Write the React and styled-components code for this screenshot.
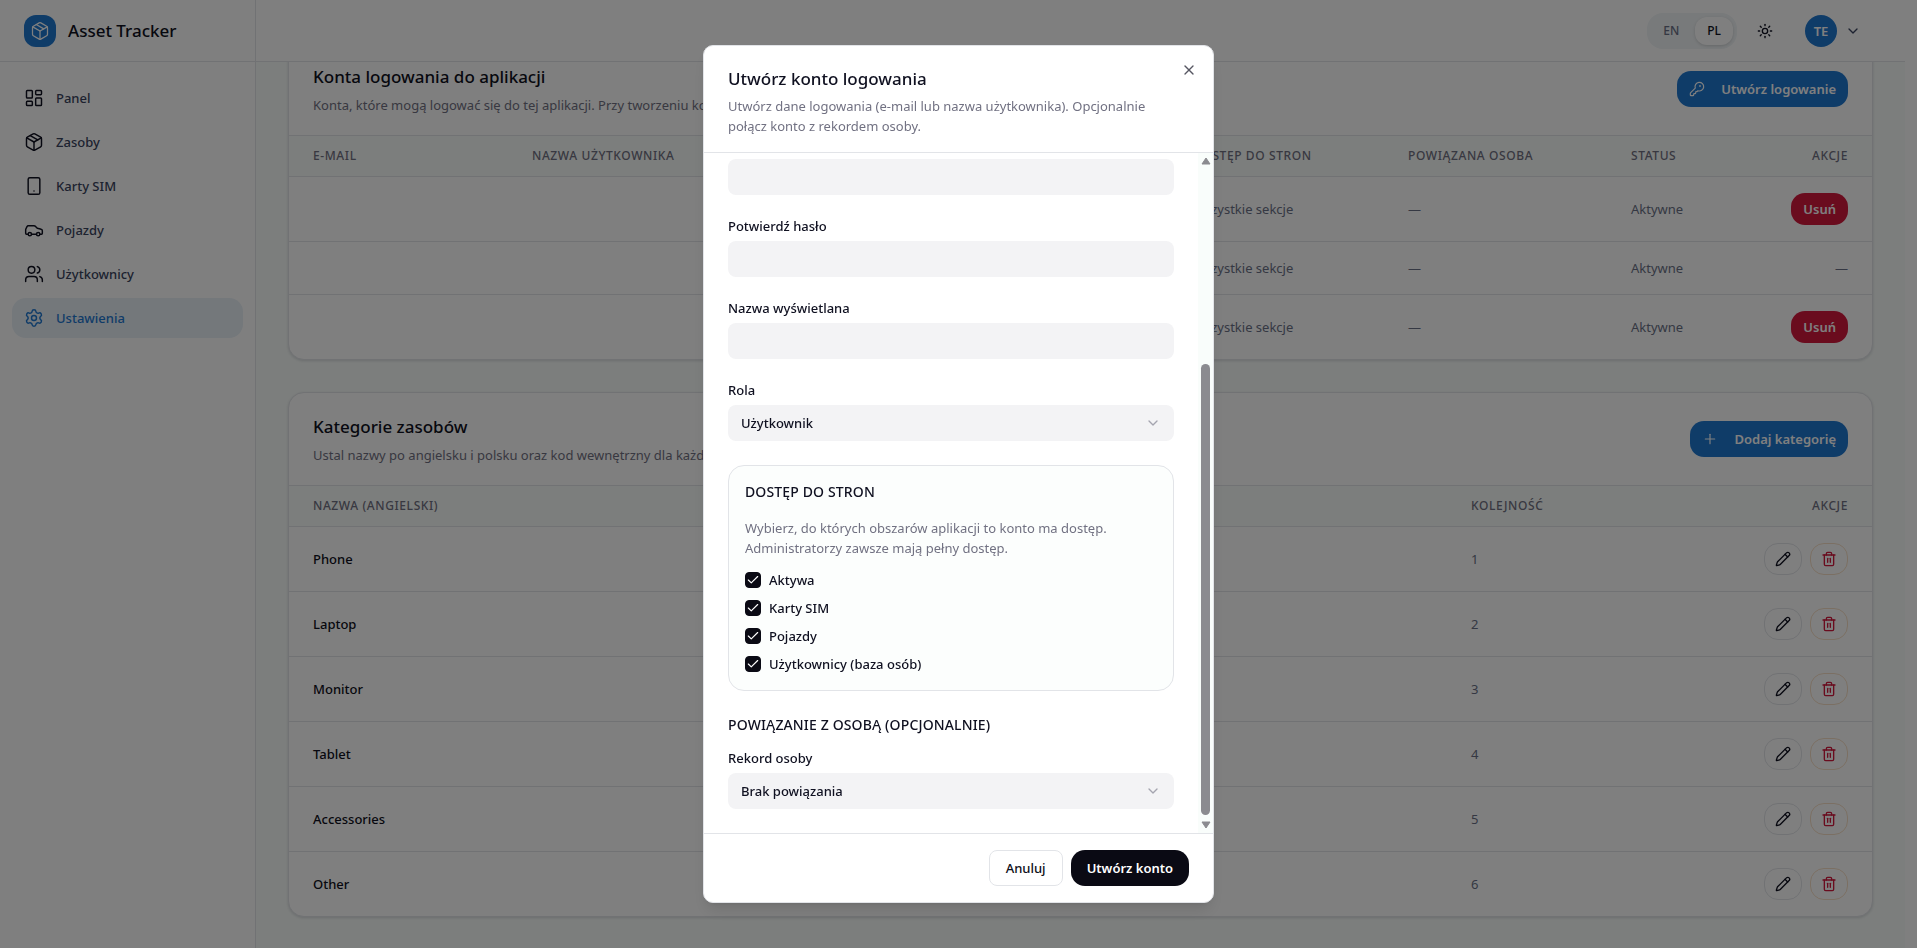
import React, { Component } from "react";
import styled, { createGlobalStyle, ThemeProvider } from "styled-components";
import {
  Car,
  Check,
  ChevronDown,
  KeyRound,
  LayoutDashboard,
  Package,
  Pencil,
  Plus,
  Settings,
  Smartphone,
  Sun,
  Trash2,
  Users,
  X,
} from "lucide-react";

const theme = {
  colors: {
    text: "#0f1020",
    ink: "#0a0a14",
    slate: "#3a4560",
    cell: "#6a7186",
    muted: "#717182",
    primary: "#1f78d1",
    danger: "#d4183d",
    dangerBorder: "#f7dfc6",
    border: "#e2e4e8",
    page: "#f9fdfb",
    field: "#f3f3f5",
    active: "#e8f0f7",
  },
  size: {
    small: "12px",
    body: "13px",
    heading: "14px",
    title: "17px",
  },
};

const navItems = [
  { label: "Panel", icon: LayoutDashboard },
  { label: "Zasoby", icon: Package },
  { label: "Karty SIM", icon: Smartphone },
  { label: "Pojazdy", icon: Car },
  { label: "Użytkownicy", icon: Users },
  { label: "Ustawienia", icon: Settings, active: true },
];

const accounts = [
  { id: 1, removable: true },
  { id: 2, removable: false },
  { id: 3, removable: true },
];

const categories = ["Phone", "Laptop", "Monitor", "Tablet", "Accessories", "Other"];

const pages = ["Aktywa", "Karty SIM", "Pojazdy", "Użytkownicy (baza osób)"];

class LoginDialog extends Component {
  constructor(props) {
    super(props);
    this.state = {
      password: "",
      confirm: "",
      name: "",
      access: { 0: true, 1: true, 2: true, 3: true },
    };

    this._handleChange = this._handleChange.bind(this);
    this._toggleAccess = this._toggleAccess.bind(this);
  }

  _handleChange(event) {
    this.setState({ [event.target.name]: event.target.value });
  }

  _toggleAccess(index) {
    const { access } = this.state;
    this.setState({ access: { ...access, [index]: !access[index] } });
  }

  render() {
    const { password, confirm, name, access } = this.state;
    return (
      <Overlay>
        <Dialog role="dialog" aria-modal="true" aria-labelledby="dialog-title">
          <DialogHeader>
            <DialogTitle id="dialog-title">Utwórz konto logowania</DialogTitle>
            <DialogText>
              Utwórz dane logowania (e-mail lub nazwa użytkownika). Opcjonalnie połącz konto z
              rekordem osoby.
            </DialogText>
            <CloseButton type="button" aria-label="Zamknij">
              <X size={16} />
            </CloseButton>
          </DialogHeader>

          <DialogBody>
            <Form>
              <Input
                type="password"
                name="password"
                aria-label="Hasło"
                value={password}
                onChange={this._handleChange}
              />
              <Field>
                <Label htmlFor="confirm">Potwierdź hasło</Label>
                <Input
                  type="password"
                  id="confirm"
                  name="confirm"
                  value={confirm}
                  onChange={this._handleChange}
                />
              </Field>
              <Field>
                <Label htmlFor="name">Nazwa wyświetlana</Label>
                <Input
                  type="text"
                  id="name"
                  name="name"
                  value={name}
                  onChange={this._handleChange}
                />
              </Field>
              <Field>
                <Label htmlFor="role">Rola</Label>
                <SelectBox>
                  <Select id="role">
                    <option>Użytkownik</option>
                    <option>Administrator</option>
                  </Select>
                  <ChevronDown size={16} />
                </SelectBox>
              </Field>

              <AccessBox>
                <SectionHeading>Dostęp do stron</SectionHeading>
                <AccessText>
                  Wybierz, do których obszarów aplikacji to konto ma dostęp. Administratorzy zawsze
                  mają pełny dostęp.
                </AccessText>
                <CheckList>
                  {pages.map((page, i) => (
                    <CheckRow key={page}>
                      <CheckMark>
                        <Checkbox checked={access[i]} onChange={() => this._toggleAccess(i)} />
                        {access[i] && <Check size={14} />}
                      </CheckMark>
                      {page}
                    </CheckRow>
                  ))}
                </CheckList>
              </AccessBox>

              <PersonSection>
                <SectionHeading>Powiązanie z osobą (opcjonalnie)</SectionHeading>
                <Field>
                  <Label htmlFor="person">Rekord osoby</Label>
                  <SelectBox>
                    <Select id="person">
                      <option>Brak powiązania</option>
                    </Select>
                    <ChevronDown size={16} />
                  </SelectBox>
                </Field>
              </PersonSection>
            </Form>
            <ScrollTrack aria-hidden="true">
              <Arrow viewBox="0 0 10 8">
                <path d="M5 1 L9 7 H1 Z" />
              </Arrow>
              <ScrollRail>
                <Thumb />
              </ScrollRail>
              <Arrow viewBox="0 0 10 8">
                <path d="M5 7 L9 1 H1 Z" />
              </Arrow>
            </ScrollTrack>
          </DialogBody>

          <DialogFooter>
            <CancelButton type="button">Anuluj</CancelButton>
            <SubmitButton type="button">Utwórz konto</SubmitButton>
          </DialogFooter>
        </Dialog>
      </Overlay>
    );
  }
}

export default class App extends Component {
  render() {
    return (
      <ThemeProvider theme={theme}>
        <GlobalStyle />
        <Shell>
          <Sidebar>
            <Brand>
              <BrandIcon>
                <Package size={20} strokeWidth={1.5} />
              </BrandIcon>
              <BrandName>Asset Tracker</BrandName>
            </Brand>
            <Nav>
              {navItems.map(({ label, icon: Icon, active }) => (
                <NavItem href="#" key={label} $active={active}>
                  <Icon size={20} strokeWidth={1.75} />
                  {label}
                </NavItem>
              ))}
            </Nav>
          </Sidebar>

          <Content>
            <TopBar>
              <LangSwitch>
                <LangButton type="button">EN</LangButton>
                <LangButton type="button" $on>
                  PL
                </LangButton>
              </LangSwitch>
              <ThemeButton type="button" aria-label="Motyw">
                <Sun size={16} />
              </ThemeButton>
              <UserButton type="button" aria-label="Konto">
                <Avatar>TE</Avatar>
                <ChevronDown size={16} />
              </UserButton>
            </TopBar>

            <Main>
              <Card>
                <CardHeader>
                  <div>
                    <CardTitle>Konta logowania do aplikacji</CardTitle>
                    <CardText>
                      Konta, które mogą logować się do tej aplikacji. Przy tworzeniu konta możesz
                      połączyć je z osobą.
                    </CardText>
                  </div>
                  <PrimaryButton type="button">
                    <KeyRound size={16} strokeWidth={1.75} />
                    Utwórz logowanie
                  </PrimaryButton>
                </CardHeader>
                <Table>
                  <colgroup>
                    <Col $w={219} />
                    <Col $w={219} />
                    <Col $w={220} />
                    <Col $w={222} />
                    <Col $w={215} />
                    <Col $w={223} />
                    <Col $w={141} />
                    <Col $w={124} />
                  </colgroup>
                  <thead>
                    <tr>
                      <Th>E-mail</Th>
                      <Th>Nazwa użytkownika</Th>
                      <Th>Nazwa</Th>
                      <Th>Rola</Th>
                      <Th>Dostęp do stron</Th>
                      <Th>Powiązana osoba</Th>
                      <Th>Status</Th>
                      <Th $right>Akcje</Th>
                    </tr>
                  </thead>
                  <tbody>
                    {accounts.map(({ id, removable }) => (
                      <tr key={id}>
                        <Td />
                        <Td />
                        <Td />
                        <Td />
                        <Td>Wszystkie sekcje</Td>
                        <Td>—</Td>
                        <Td>Aktywne</Td>
                        <Td $right>
                          {removable ? <DeleteButton type="button">Usuń</DeleteButton> : "—"}
                        </Td>
                      </tr>
                    ))}
                  </tbody>
                </Table>
              </Card>

              <Card>
                <CardHeader>
                  <div>
                    <CardTitle>Kategorie zasobów</CardTitle>
                    <CardText>
                      Ustal nazwy po angielsku i polsku oraz kod wewnętrzny dla każdej kategorii.
                    </CardText>
                  </div>
                  <PrimaryButton type="button">
                    <Plus size={16} strokeWidth={1.75} />
                    Dodaj kategorię
                  </PrimaryButton>
                </CardHeader>
                <Table>
                  <colgroup>
                    <Col $w={440} />
                    <Col $w={718} />
                    <Col $w={200} />
                    <Col $w={225} />
                  </colgroup>
                  <thead>
                    <tr>
                      <Th>Nazwa (angielski)</Th>
                      <Th />
                      <Th>Kolejność</Th>
                      <Th $right>Akcje</Th>
                    </tr>
                  </thead>
                  <tbody>
                    {categories.map((category, i) => (
                      <tr key={category}>
                        <Td $strong>{category}</Td>
                        <Td />
                        <Td>{i + 1}</Td>
                        <Td $right>
                          <RowActions>
                            <IconButton type="button" aria-label="Edytuj">
                              <Pencil size={16} />
                            </IconButton>
                            <IconButton type="button" aria-label="Usuń" $danger>
                              <Trash2 size={16} />
                            </IconButton>
                          </RowActions>
                        </Td>
                      </tr>
                    ))}
                  </tbody>
                </Table>
              </Card>
            </Main>
          </Content>
        </Shell>
        <LoginDialog />
      </ThemeProvider>
    );
  }
}

const GlobalStyle = createGlobalStyle`
  *, *::before, *::after {
    box-sizing: border-box;
  }
  body {
    margin: 0;
    overflow: hidden;
    background: #fff;
    color: ${theme.colors.text};
    font-family: "Noto Sans", "Open Sans", sans-serif;
    font-size: ${theme.size.body};
    line-height: 20px;
  }
  button, input, select {
    font: inherit;
    color: inherit;
  }
  button {
    cursor: pointer;
  }
  h1, h2, h3, p {
    margin: 0;
  }
`;

/* page */

const Shell = styled.div`
  display: flex;
  height: 100vh;
  padding-right: 12px;
`;

const Sidebar = styled.aside`
  flex: 0 0 256px;
  border-right: 1px solid ${p => p.theme.colors.border};
  background: #fff;
`;

const Brand = styled.div`
  display: flex;
  align-items: center;
  gap: 12px;
  height: 62px;
  padding: 0 24px;
  border-bottom: 1px solid ${p => p.theme.colors.border};
`;

const BrandIcon = styled.span`
  display: flex;
  align-items: center;
  justify-content: center;
  width: 32px;
  height: 32px;
  border-radius: 12px;
  background: ${p => p.theme.colors.primary};
  color: #fff;
`;

const BrandName = styled.span`
  font-size: ${p => p.theme.size.title};
  font-weight: 500;
`;

const Nav = styled.nav`
  display: flex;
  flex-direction: column;
  gap: 4px;
  padding: 16px 12px;
`;

const NavItem = styled.a`
  display: flex;
  align-items: center;
  gap: 12px;
  height: 40px;
  padding: 0 12px;
  border-radius: 14px;
  font-weight: 500;
  text-decoration: none;
  color: ${p => (p.$active ? p.theme.colors.primary : p.theme.colors.slate)};
  background: ${p => (p.$active ? p.theme.colors.active : "transparent")};

  svg {
    color: ${p => (p.$active ? p.theme.colors.primary : p.theme.colors.text)};
  }
`;

const Content = styled.div`
  display: flex;
  flex: 1;
  flex-direction: column;
  min-width: 0;
`;

const TopBar = styled.header`
  display: flex;
  flex: 0 0 62px;
  align-items: center;
  justify-content: flex-end;
  gap: 12px;
  padding: 0 32px;
  border-bottom: 1px solid ${p => p.theme.colors.border};
  background: #fff;
`;

const LangSwitch = styled.div`
  display: flex;
  gap: 4px;
  padding: 4px;
  border-radius: 16px;
  background: #f0f4f6;
`;

const LangButton = styled.button`
  height: 28px;
  padding: 0 12px;
  border: 0;
  border-radius: 12px;
  font-size: ${p => p.theme.size.small};
  font-weight: 500;
  color: ${p => (p.$on ? p.theme.colors.text : p.theme.colors.cell)};
  background: ${p => (p.$on ? "#fff" : "transparent")};
  box-shadow: ${p => (p.$on ? "0 1px 3px rgba(0, 0, 0, 0.15)" : "none")};
`;

const ThemeButton = styled.button`
  display: flex;
  align-items: center;
  justify-content: center;
  width: 32px;
  height: 32px;
  padding: 0;
  border: 0;
  background: none;
`;

const UserButton = styled.button`
  display: flex;
  align-items: center;
  gap: 8px;
  padding: 0 12px;
  border: 0;
  background: none;
  color: ${p => p.theme.colors.slate};
`;

const Avatar = styled.span`
  display: flex;
  align-items: center;
  justify-content: center;
  width: 32px;
  height: 32px;
  border-radius: 50%;
  font-weight: 600;
  color: #fff;
  background: ${p => p.theme.colors.primary};
`;

const Main = styled.main`
  display: flex;
  flex: 1;
  flex-direction: column;
  justify-content: flex-end;
  gap: 32px;
  min-height: 0;
  padding: 0 32px 31px;
  overflow: hidden;
  background: ${p => p.theme.colors.page};
`;

const Card = styled.section`
  flex: none;
  border: 1px solid ${p => p.theme.colors.border};
  border-radius: 16px;
  overflow: hidden;
  background: #fff;
  box-shadow: 0 1px 3px rgba(15, 23, 42, 0.15);
`;

const CardHeader = styled.div`
  display: flex;
  align-items: center;
  justify-content: space-between;
  padding: 20px 24px;
`;

const CardTitle = styled.h2`
  margin-bottom: 4px;
  font-size: ${p => p.theme.size.title};
  font-weight: 500;
  line-height: 28px;
`;

const CardText = styled.p`
  color: ${p => p.theme.colors.muted};
`;

const PrimaryButton = styled.button`
  display: flex;
  align-items: center;
  gap: 16px;
  height: 36px;
  padding: 0 12px;
  border: 0;
  border-radius: 14px;
  font-weight: 600;
  color: #fff;
  background: ${p => p.theme.colors.primary};
`;

const Table = styled.table`
  width: 100%;
  table-layout: fixed;
  border-collapse: separate;
  border-spacing: 0;
`;

const Col = styled.col`
  width: ${p => (p.$w / 1583) * 100}%;
`;

const Th = styled.th`
  height: 42px;
  padding: 0 24px;
  border: solid ${p => p.theme.colors.border};
  border-width: 1px 0;
  font-size: ${p => p.theme.size.small};
  font-weight: 500;
  letter-spacing: 0.05em;
  text-align: ${p => (p.$right ? "right" : "left")};
  text-transform: uppercase;
  white-space: nowrap;
  color: ${p => p.theme.colors.muted};
  background: ${p => p.theme.colors.page};
`;

const Td = styled.td`
  padding: 16px 24px;
  font-weight: ${p => (p.$strong ? 500 : 400)};
  text-align: ${p => (p.$right ? "right" : "left")};
  color: ${p => (p.$strong ? p.theme.colors.text : p.theme.colors.cell)};

  tr:not(:last-child) > & {
    border-bottom: 1px solid ${p => p.theme.colors.border};
  }
`;

const DeleteButton = styled.button`
  display: block;
  height: 32px;
  margin-left: auto;
  padding: 0 12px;
  border: 0;
  border-radius: 14px;
  font-weight: 600;
  color: #fff;
  background: ${p => p.theme.colors.danger};
`;

const RowActions = styled.div`
  display: flex;
  justify-content: flex-end;
  gap: 8px;
`;

const IconButton = styled.button`
  display: flex;
  align-items: center;
  justify-content: center;
  width: 38px;
  height: 32px;
  padding: 0;
  border: 1px solid ${p => (p.$danger ? p.theme.colors.dangerBorder : p.theme.colors.border)};
  border-radius: 14px;
  background: #fff;
  color: ${p => (p.$danger ? p.theme.colors.danger : p.theme.colors.text)};
`;

/* dialog */

const Overlay = styled.div`
  position: fixed;
  inset: 0;
  display: flex;
  align-items: center;
  justify-content: center;
  background: rgba(0, 0, 0, 0.5);
`;

const Dialog = styled.div`
  display: flex;
  flex-direction: column;
  width: 100%;
  max-width: 511px;
  height: calc(100vh - 90px);
  border: 1px solid ${p => p.theme.colors.border};
  border-radius: 10px;
  overflow: hidden;
  background: #fff;
  box-shadow: 0 10px 15px -3px rgba(0, 0, 0, 0.1), 0 4px 6px -4px rgba(0, 0, 0, 0.1);
`;

const DialogHeader = styled.div`
  position: relative;
  padding: 24px 36px 16px 24px;
  border-bottom: 1px solid ${p => p.theme.colors.border};
`;

const DialogTitle = styled.h1`
  margin-bottom: 8px;
  font-size: ${p => p.theme.size.title};
  font-weight: 500;
  line-height: 18px;
`;

const DialogText = styled.p`
  color: ${p => p.theme.colors.muted};
`;

const CloseButton = styled.button`
  position: absolute;
  top: 16px;
  right: 16px;
  display: flex;
  padding: 0;
  border: 0;
  background: none;
  opacity: 0.7;
`;

const DialogBody = styled.div`
  display: flex;
  flex: 1;
  min-height: 0;
`;

const Form = styled.form`
  display: flex;
  flex: 1;
  flex-direction: column;
  justify-content: flex-end;
  gap: 24px;
  min-width: 0;
  padding: 0 24px 24px;
  overflow: hidden;
`;

const Field = styled.div`
  display: flex;
  flex-direction: column;
  gap: 8px;
`;

const Label = styled.label`
  font-weight: 500;
  line-height: 14px;
`;

const Input = styled.input`
  flex: none;
  width: 100%;
  height: 36px;
  padding: 0 12px;
  border: 0;
  border-radius: 8px;
  background: ${p => p.theme.colors.field};
`;

const SelectBox = styled.div`
  position: relative;

  svg {
    position: absolute;
    top: 10px;
    right: 13px;
    color: ${p => p.theme.colors.muted};
    opacity: 0.6;
    pointer-events: none;
  }
`;

const Select = styled.select`
  appearance: none;
  display: block;
  width: 100%;
  height: 36px;
  padding: 0 36px 0 13px;
  border: 0;
  border-radius: 8px;
  font-weight: 500;
  background: ${p => p.theme.colors.field};
`;

const AccessBox = styled.div`
  padding: 16px;
  border: 1px solid ${p => p.theme.colors.border};
  border-radius: 16px;
  background: #fcfefd;
`;

const SectionHeading = styled.h3`
  font-size: ${p => p.theme.size.heading};
  font-weight: 500;
  letter-spacing: 0.01em;
  text-transform: uppercase;
  line-height: 20px;
`;

const AccessText = styled.p`
  margin: 16px 0 12px;
  color: ${p => p.theme.colors.muted};
`;

const CheckList = styled.div`
  display: flex;
  flex-direction: column;
  gap: 8px;
`;

const CheckRow = styled.label`
  display: flex;
  align-items: center;
  gap: 8px;
  font-weight: 500;
`;

const CheckMark = styled.span`
  display: grid;
  place-items: center;
  width: 16px;
  height: 16px;
  color: #fff;

  > * {
    grid-area: 1 / 1;
  }
  svg {
    pointer-events: none;
  }
`;

const Checkbox = styled.input.attrs({
  type: "checkbox",
})`
  appearance: none;
  width: 16px;
  height: 16px;
  margin: 0;
  border: 1px solid ${p => p.theme.colors.ink};
  border-radius: 4px;

  &:checked {
    background: ${p => p.theme.colors.ink};
  }
`;

const PersonSection = styled.div`
  display: flex;
  flex-direction: column;
  gap: 16px;
`;

const ScrollTrack = styled.div`
  display: flex;
  flex: 0 0 15px;
  flex-direction: column;
  align-items: center;
  padding: 4px 0;
  background: ${p => p.theme.colors.page};
`;

const Arrow = styled.svg`
  width: 10px;
  height: 8px;
  fill: #8b8b90;
  stroke: #8b8b90;
  stroke-linejoin: round;
`;

const ScrollRail = styled.div`
  display: flex;
  flex: 1;
  flex-direction: column;
  justify-content: flex-end;
  padding: 6px 0;
`;

const Thumb = styled.div`
  width: 9px;
  height: 70%;
  border-radius: 5px;
  background: #8b8b90;
`;

const DialogFooter = styled.div`
  display: flex;
  justify-content: flex-end;
  gap: 8px;
  padding: 16px 24px;
  border-top: 1px solid ${p => p.theme.colors.border};
`;

const CancelButton = styled.button`
  height: 36px;
  padding: 0 16px;
  border: 1px solid ${p => p.theme.colors.border};
  border-radius: 8px;
  font-weight: 500;
  background: #fff;
`;

const SubmitButton = styled.button`
  height: 36px;
  padding: 0 16px;
  border: 0;
  border-radius: 14px;
  font-weight: 600;
  color: #fff;
  background: ${p => p.theme.colors.ink};
`;
